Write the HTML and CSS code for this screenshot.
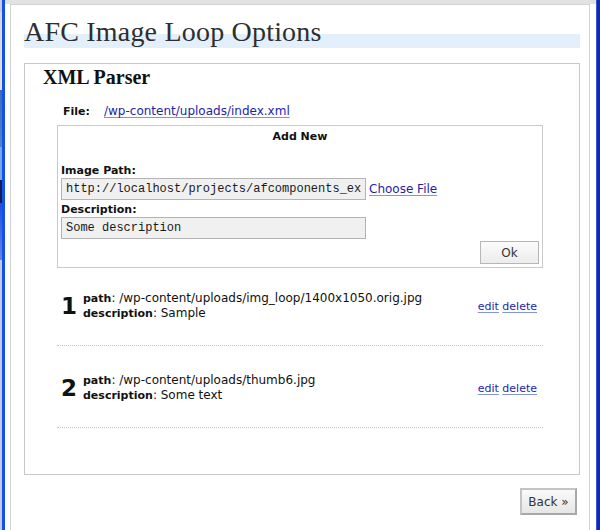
FILE: index.html
```html
<!DOCTYPE html>
<html>
<head>
<meta charset="utf-8">
<link rel="stylesheet" href="styles.css">
</head>
<body>
<div class="screen">
  <div class="desk"></div>
  <div class="bar-l"></div>
  <div class="frame">
    <div class="panel">
      <h1 class="title">AFC Image Loop Options</h1>
      <div class="box">
        <h2 class="box-title">XML Parser</h2>
        <div class="content">
          <div class="file-row"><span class="file-label">File:</span><a class="link" href="#">/wp-content/uploads/index.xml</a></div>
          <div class="addnew">
            <div class="addnew-title">Add New</div>
            <div class="field-label">Image Path:</div>
            <div class="field-row">
              <input class="field" type="text" value="http://localhost/projects/afcomponents_examples/image_loop.jpg">
              <a class="link choose" href="#">Choose File</a>
            </div>
            <div class="field-label">Description:</div>
            <div class="field-row">
              <input class="field" type="text" value="Some description">
            </div>
            <div class="ok-row"><button class="btn ok">Ok</button></div>
          </div>
          <div class="items">
            <div class="item">
              <div class="num">1</div>
              <div class="info">
                <div><b>path</b>: /wp-content/uploads/img_loop/1400x1050.orig.jpg</div>
                <div><b>description</b>: Sample</div>
              </div>
              <div class="actions"><a class="link" href="#">edit</a> <a class="link" href="#">delete</a></div>
            </div>
            <div class="item">
              <div class="num">2</div>
              <div class="info">
                <div><b>path</b>: /wp-content/uploads/thumb6.jpg</div>
                <div><b>description</b>: Some text</div>
              </div>
              <div class="actions"><a class="link" href="#">edit</a> <a class="link" href="#">delete</a></div>
            </div>
          </div>
        </div>
      </div>
      <div class="back-row"><button class="btn back">Back »</button></div>
    </div>
  </div>
  <div class="bar-r"></div>
</div>
</body>
</html>
```

FILE: styles.css
```css
html, body {
  margin: 0;
  padding: 0;
  background: #ffffff;
}
.screen {
  display: flex;
  height: 530px;
  overflow: hidden;
  font-family: "DejaVu Sans", "Liberation Sans", sans-serif;
  font-size: 12px;
  color: #111;
}
.desk {
  width: 2px;
  background: linear-gradient(to bottom,
    #c8ccd4 0px, #c8ccd4 12px,
    #d8d8d8 12px, #e4e0d8 90px,
    #3a6fb0 90px, #4f86c8 147px,
    #78a8e0 147px, #78a8e0 180px,
    #0e2050 180px, #0e2050 203px,
    #1b4fe0 203px, #6688d8 260px,
    #c4cad8 260px, #c4cad8 530px);
}
.bar-l {
  width: 3px;
  background: #1450ee;
}
.frame {
  flex: 1;
  display: flex;
  flex-direction: column;
  border-top: 4px solid #e2e2e2;
  padding: 0 6px 0 5px;
  background: #fff;
}
.panel {
  flex: 1;
  border: 1px solid #d2d2d2;
  border-bottom: none;
  padding: 12px 9px 0 13px;
}
.bar-r {
  width: 3px;
  border-left: 1px solid #3a58d8;
  background: #1028b4;
}
.title {
  margin: 0;
  font-family: "Liberation Serif", serif;
  font-weight: normal;
  font-size: 28px;
  line-height: 30px;
  padding-bottom: 1px;
  color: #2e2e2e;
  letter-spacing: 0.2px;
  background: linear-gradient(to bottom, transparent 17px, #e3effb 17px);
}
.box {
  margin-top: 15px;
  border: 1px solid #c8c8c8;
  padding-bottom: 46px;
}
.box-title {
  margin: 0;
  padding: 1px 0 0 18px;
  font-family: "Liberation Serif", serif;
  font-weight: bold;
  font-size: 20px;
  line-height: 24px;
  color: #111;
}
.content {
  padding: 0 36px 0 32px;
}
.file-row {
  margin-top: 15px;
  padding-left: 6px;
  line-height: 14px;
}
.file-label {
  display: inline-block;
  width: 41px;
  font-weight: bold;
  font-size: 11px;
}
.link {
  color: #1e1eaa;
  text-decoration: underline;
  text-decoration-color: #8294dc;
  text-underline-offset: 2px;
}
.addnew {
  margin-top: 6px;
  border: 1px solid #cacaca;
  padding: 3px;
}
.addnew-title {
  text-align: center;
  font-weight: bold;
  font-size: 11px;
  line-height: 14px;
  margin-top: 1px;
}
.field-label {
  font-weight: bold;
  font-size: 11px;
  line-height: 14px;
  margin-top: 20px;
}
.field-label + .field-row + .field-label {
  margin-top: 3px;
}
.field-row {
  display: flex;
  align-items: center;
  gap: 3px;
}
.field {
  box-sizing: border-box;
  width: 305px;
  height: 22px;
  margin: 0;
  padding: 0 4px;
  border: 1px solid #b4b4b4;
  background: #f0f0f0;
  font-family: "Liberation Mono", monospace;
  font-size: 12px;
  color: #1a1a1a;
  outline: none;
}
.choose {
  font-size: 12px;
}
.ok-row {
  display: flex;
  justify-content: flex-end;
  margin-top: 2px;
}
.btn {
  font-family: "DejaVu Sans", "Liberation Sans", sans-serif;
  font-size: 12px;
  color: #333;
  background: linear-gradient(to bottom, #fbfbfb, #ececec);
  border: 1px solid #b6b6b6;
  padding: 0;
  margin: 0;
}
.ok {
  width: 59px;
  height: 23px;
}
.items {
  margin-top: 23px;
}
.item {
  display: flex;
  align-items: center;
  padding: 0 6px 24px 4px;
  border-bottom: 1px dotted #c4c4c4;
}
.item + .item {
  margin-top: 27px;
}
.num {
  width: 22px;
  font-weight: bold;
  font-size: 23px;
  line-height: 28px;
  color: #111;
}
.info {
  flex: 1;
  line-height: 14px;
}
.info b {
  font-size: 11px;
}
.actions {
  font-size: 11px;
}
.back-row {
  display: flex;
  justify-content: flex-end;
  margin-top: 13px;
  padding-right: 3px;
}
.back {
  width: 57px;
  height: 27px;
  border: 2px solid #c4c4c4;
  border-right-color: #a8a8a8;
  border-bottom-color: #a8a8a8;
  background: linear-gradient(to bottom, #fafafa, #e6e6e6);
  font-size: 12px;
}
```
